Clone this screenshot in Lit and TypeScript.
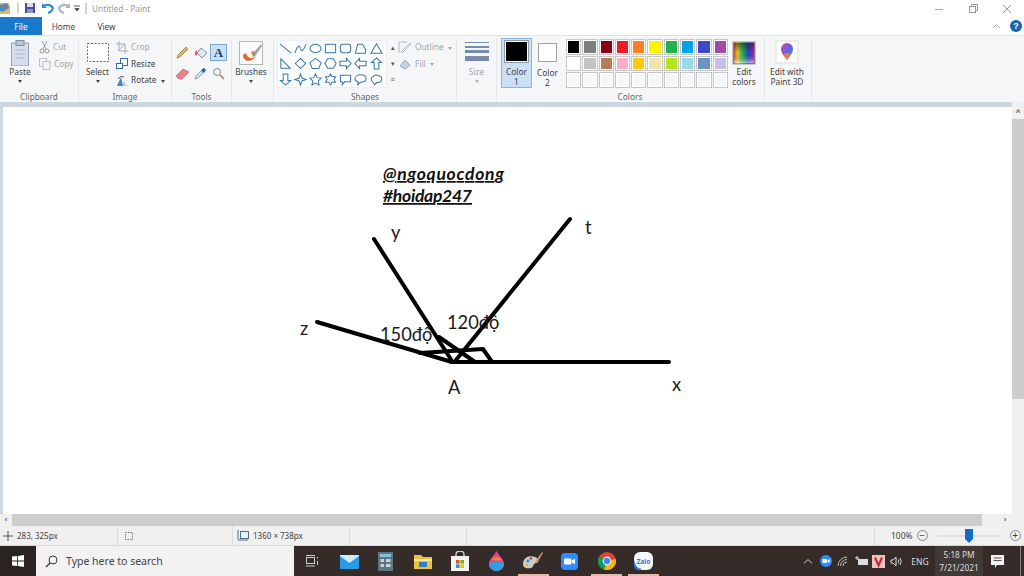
import {LitElement, css, html, svg} from 'lit';
import {customElement} from 'lit/decorators.js';

const ROW_1 = ['#000000', '#7f7f7f', '#880015', '#ed1c24', '#ff7f27', '#fff200', '#22b14c', '#00a2e8', '#3f48cc', '#a349a4'];
const ROW_2 = ['#ffffff', '#c3c3c3', '#b97a57', '#ffaec9', '#ffc90e', '#efe4b0', '#b5e61d', '#99d9ea', '#7092be', '#c8bfe7'];
const ROW_3 = Array(10).fill('#f5f6f7');

// shape gallery glyphs, drawn in a 14x14 box
const SHAPES = [
  svg`<path d="M1 2 L13 12"/>`,
  svg`<path d="M1 12 C4 3 6 3 7 7 S10 10 13 2"/>`,
  svg`<ellipse cx="7" cy="7" rx="6" ry="4.5"/>`,
  svg`<rect x="1.5" y="2.5" width="11" height="9"/>`,
  svg`<rect x="1.5" y="2.5" width="11" height="9" rx="2.5"/>`,
  svg`<path d="M1.5 12 L4 2.5 H9 L12.5 8 V12 Z"/>`,
  svg`<path d="M7 2 L13 12 H1 Z"/>`,
  svg`<path d="M2 2 V12 H12 Z"/>`,
  svg`<path d="M7 1.5 L12.5 7 L7 12.5 L1.5 7 Z"/>`,
  svg`<path d="M7 1.5 L13 6 L10.5 12.5 H3.5 L1 6 Z"/>`,
  svg`<path d="M4 2 H10 L13 7 L10 12 H4 L1 7 Z"/>`,
  svg`<path d="M1 4.5 H8 V1.5 L13 7 L8 12.5 V9.5 H1 Z"/>`,
  svg`<path d="M13 4.5 H6 V1.5 L1 7 L6 12.5 V9.5 H13 Z"/>`,
  svg`<path d="M4.5 13 V6 H1.5 L7 1 L12.5 6 H9.5 V13 Z"/>`,
  svg`<path d="M4.5 1 V8 H1.5 L7 13 L12.5 8 H9.5 V1 Z"/>`,
  svg`<path d="M7 1 L8.5 5.5 L13 7 L8.5 8.5 L7 13 L5.5 8.5 L1 7 L5.5 5.5 Z"/>`,
  svg`<path d="M7 1 L8.8 5 L13 5.5 L10 8.5 L10.8 13 L7 10.8 L3.2 13 L4 8.5 L1 5.5 L5.2 5 Z"/>`,
  svg`<path d="M7 1 L8.7 4 H12.5 L10.6 7 L12.5 10 H8.7 L7 13 L5.3 10 H1.5 L3.4 7 L1.5 4 H5.3 Z"/>`,
  svg`<path d="M1.5 2.5 H12.5 V9.5 H6 L3.5 12.5 V9.5 H1.5 Z"/>`,
  svg`<path d="M7 2 C11 2 13 4 13 6.2 C13 8.5 10.5 10 7 10 L4 12.5 L4.5 9.5 C2.5 9 1 7.8 1 6.2 C1 4 3 2 7 2 Z"/>`,
  svg`<path d="M3 9.5 C0.5 8 1 4.5 3.5 4 C4 2 7 1.5 8.5 3 C11 2.5 13.5 5 12.5 7.5 C12 10 9 10.5 7.5 9.8 L5 12.5 Z"/>`,
];

@customElement('paint-ribbon')
export class PaintRibbon extends LitElement {
  static styles = css`
  :host {
    background: #f5f6f7;
    border-top: 1px solid #e2e3e4;
    box-sizing: border-box;
    color: #444;
    display: flex;
    font: 8.3px/10px "Noto Sans", sans-serif;
    height: 67px;
    padding-top: 2px;
  }

  .group {
    border-right: 1px solid #e6e7e8;
    box-sizing: border-box;
    display: flex;
    flex-direction: column;
    flex: none;
    height: 64px;
  }

  .body {
    display: flex;
    flex: 1;
    min-height: 0;
  }

  .name {
    color: #666;
    height: 11px;
    line-height: 11px;
    text-align: center;
  }

  .tall {
    align-items: center;
    display: flex;
    flex-direction: column;
    flex: none;
    text-align: center;
  }

  .tall svg {
    display: block;
  }

  .tall-label {
    margin-top: 1px;
  }

  .caret {
    border-left: 2.5px solid transparent;
    border-right: 2.5px solid transparent;
    border-top: 3px solid #444;
    display: block;
    height: 0;
    margin-top: 3px;
    width: 0;
  }

  .dim {
    color: #a6a6a6;
  }

  .dim .caret {
    border-top-color: #b0b0b0;
  }

  .rows {
    display: flex;
    flex-direction: column;
    margin-top: 1px;
  }

  .row {
    align-items: center;
    display: flex;
    gap: 3px;
    height: 16.5px;
  }

  .inline-caret {
    border-left: 2.5px solid transparent;
    border-right: 2.5px solid transparent;
    border-top: 3px solid currentColor;
    display: inline-block;
    margin-left: 4px;
    vertical-align: middle;
  }

  .tools {
    display: grid;
    gap: 4px 1px;
    grid-template-columns: repeat(3, 17px);
    grid-template-rows: 17px 17px;
    margin: 6px 0 0 2px;
  }

  .tool {
    align-items: center;
    box-sizing: border-box;
    display: flex;
    justify-content: center;
  }

  .tool.on {
    background: #c9e0f7;
    border: 1px solid #7da7d4;
    color: #1f3f7a;
    font: bold 13px "Liberation Serif", serif;
  }

  .gallery {
    background: #fbfcfd;
    border: 1px solid #eceef0;
    box-sizing: border-box;
    display: grid;
    grid-template-columns: repeat(7, 15.1px);
    grid-template-rows: repeat(3, 15.4px);
    height: 48px;
    margin: 2px 0 0 3px;
    width: 110px;
  }

  .gallery svg {
    fill: #fff;
    height: 13px;
    margin: 1px;
    stroke: #3b78a8;
    stroke-width: 1.1;
    width: 13px;
  }

  .gallery-scroll {
    color: #555;
    display: flex;
    flex-direction: column;
    font-size: 7px;
    height: 48px;
    justify-content: space-around;
    margin-top: 2px;
    text-align: center;
    width: 11px;
  }

  .size-lines {
    display: flex;
    flex-direction: column;
    gap: 2.5px;
    height: 24px;
    margin-top: 4px;
    width: 24px;
  }

  .size-lines i {
    background: #7a8cab;
    display: block;
  }

  .color-btn {
    align-items: center;
    box-sizing: border-box;
    display: flex;
    flex-direction: column;
    height: 50px;
    text-align: center;
    width: 31px;
  }

  .color-btn.on {
    background: #c9e0f7;
    border: 1px solid #8bb5e0;
  }

  .chip {
    box-sizing: border-box;
    display: block;
  }

  .chip.one {
    background: #000;
    border: 1px solid #fff;
    height: 24px;
    margin: 2px 0 5px;
    outline: 1px solid #8f9aa8;
    width: 23px;
  }

  .chip.two {
    background: #fff;
    border: 1px solid #a0a0a0;
    height: 20px;
    margin: 5px 0 6px;
    width: 19px;
  }

  .palette {
    display: grid;
    gap: 1px;
    grid-template-columns: repeat(10, 15.3px);
    grid-auto-rows: 15.5px;
    margin: 1px 0 0 2px;
  }

  .swatch {
    border: 1px solid #c6c6c6;
    box-shadow: inset 0 0 0 1px #fff;
    box-sizing: border-box;
    display: block;
  }
  `;

  render() {
    return html`
    <div class="group" style="width:79px">
      <div class="body">
        <div class="tall" style="width:38px;margin-left:1px">
          <svg width="22" height="28" viewBox="0 0 22 28">
            <rect x="2.5" y="5" width="17" height="23" fill="#d5deeb" stroke="#8fa3bd"/>
            <rect x="7" y="2.5" width="8" height="5" fill="#b7c5d8" stroke="#7f93ad"/>
            <path d="M6 12 H16 M6 16 H16 M6 20 H16" stroke="#a9b8cc"/>
          </svg>
          <span class="tall-label">Paste</span>
          <i class="caret"></i>
        </div>
        <div class="rows dim">
          <div class="row">
            <svg width="11" height="14" viewBox="0 0 11 14" fill="none" stroke="#9a9a9a">
              <path d="M3 1 L7 9 M8 1 L4 9"/><circle cx="3" cy="11" r="2"/><circle cx="8" cy="11" r="2"/>
            </svg>
            <span>Cut</span>
          </div>
          <div class="row">
            <svg width="12" height="12" viewBox="0 0 12 12" fill="#f3f5f8" stroke="#b8c0cc">
              <rect x="0.5" y="0.5" width="7" height="8"/><rect x="4" y="3.5" width="7" height="8"/>
            </svg>
            <span>Copy</span>
          </div>
        </div>
      </div>
      <div class="name">Clipboard</div>
    </div>

    <div class="group" style="width:93px">
      <div class="body">
        <div class="tall" style="width:37px">
          <svg width="24" height="28" viewBox="0 0 24 28">
            <rect x="1.5" y="5.5" width="21" height="18" fill="#fff" stroke="#5f6b7a" stroke-dasharray="2 1.5"/>
          </svg>
          <span class="tall-label">Select</span>
          <i class="caret"></i>
        </div>
        <div class="rows">
          <div class="row dim">
            <svg width="12" height="13" viewBox="0 0 12 13" fill="none" stroke="#a9b0ba">
              <path d="M3 0 V10 H12 M0 3 H9 V13 M3 9 L9 3"/>
            </svg>
            <span>Crop</span>
          </div>
          <div class="row">
            <svg width="12" height="13" viewBox="0 0 12 13" fill="#fff" stroke="#2f6ea8">
              <rect x="4.5" y="1.5" width="7" height="7"/><rect x="0.5" y="6.5" width="6" height="5"/>
            </svg>
            <span>Resize</span>
          </div>
          <div class="row">
            <svg width="12" height="13" viewBox="0 0 12 13">
              <path d="M1 12 L5 3 L7 12 Z" fill="#3d87c4"/><path d="M7 12 L12 12 L7 7 Z" fill="#bcd0e4"/>
              <path d="M2 5 Q4 1 8 3" fill="none" stroke="#555"/>
            </svg>
            <span>Rotate<i class="inline-caret"></i></span>
          </div>
        </div>
      </div>
      <div class="name">Image</div>
    </div>

    <div class="group" style="width:60px">
      <div class="body">
        <div class="tools">
          <span class="tool">
            <svg width="13" height="13" viewBox="0 0 13 13"><path d="M1 12 L2 9 L10 1 L12 3 L4 11 Z" fill="#e2b553" stroke="#8d7a4f" stroke-width=".7"/></svg>
          </span>
          <span class="tool">
            <svg width="14" height="14" viewBox="0 0 14 14"><path d="M7 2 L13 7 L8 12 L3 7 Z" fill="#dfe7f1" stroke="#7d93b0"/><path d="M2 4 Q0 8 2 10 Q4 8 3 5 Z" fill="#e0584c"/></svg>
          </span>
          <span class="tool on">A</span>
          <span class="tool">
            <svg width="15" height="12" viewBox="0 0 15 12"><path d="M1 8 L8 1 L14 4 L7 11 H4 Z" fill="#e8838a" stroke="#b96068" stroke-width=".7"/></svg>
          </span>
          <span class="tool">
            <svg width="13" height="13" viewBox="0 0 13 13"><path d="M1 12 L2 9 L7 4 L9 6 L4 11 Z" fill="#cfe0ee" stroke="#6c8bab" stroke-width=".7"/><path d="M7 3 L10 1 L12 3 L10 6 Z" fill="#1f5f9f"/></svg>
          </span>
          <span class="tool">
            <svg width="13" height="13" viewBox="0 0 13 13" fill="none"><circle cx="5" cy="5" r="3.5" fill="#eef4fa" stroke="#7b8794"/><path d="M8 8 L12 12" stroke="#a5794a" stroke-width="1.6"/></svg>
          </span>
        </div>
      </div>
      <div class="name">Tools</div>
    </div>

    <div class="group" style="width:42px">
      <div class="body">
        <div class="tall" style="width:38px">
          <svg width="26" height="28" viewBox="0 0 26 28">
            <rect x="1.5" y="3.5" width="23" height="23" fill="#fbfbfb" stroke="#b5b5b5"/>
            <path d="M5 17 C5 24 14 25 18 18 C14 22 9 20 8 15 Z" fill="#e2652b"/>
            <path d="M15 15 L23 6 L24 8 L18 17 Z" fill="#a5a9ad"/>
            <path d="M13 14 L16 13 L18 17 L15 19 Z" fill="#b68a58"/>
          </svg>
          <span class="tall-label">Brushes</span>
          <i class="caret"></i>
        </div>
      </div>
    </div>

    <div class="group" style="width:183px">
      <div class="body">
        <div class="gallery">
          ${SHAPES.map((shape) => html`<svg viewBox="0 0 14 14">${shape}</svg>`)}
        </div>
        <div class="gallery-scroll"><span>▴</span><span>▾</span><span>≡</span></div>
        <div class="rows dim">
          <div class="row">
            <svg width="14" height="13" viewBox="0 0 14 13" fill="none" stroke="#b5bcc6"><path d="M1 12 V1 H9 M3 11 L12 2 L13 3 L4 12 Z"/></svg>
            <span>Outline<i class="inline-caret"></i></span>
          </div>
          <div class="row">
            <svg width="14" height="13" viewBox="0 0 14 13"><path d="M2 9 L7 3 L12 8 L7 12 Z" fill="#c6d2e0" stroke="#98a9bd"/></svg>
            <span>Fill<i class="inline-caret"></i></span>
          </div>
        </div>
      </div>
      <div class="name">Shapes</div>
    </div>

    <div class="group" style="width:40px">
      <div class="body">
        <div class="tall dim" style="width:39px">
          <div class="size-lines">
            <i style="height:1px"></i><i style="height:2px"></i><i style="height:3px"></i><i style="height:5px"></i>
          </div>
          <span class="tall-label">Size</span>
          <i class="caret"></i>
        </div>
      </div>
    </div>

    <div class="group" style="width:268px">
      <div class="body">
        <div class="color-btn on" style="margin-left:4px">
          <span class="chip one"></span>
          <span>Color<br>1</span>
        </div>
        <div class="color-btn" style="margin-right:1px">
          <span class="chip two"></span>
          <span>Color<br>2</span>
        </div>
        <div class="palette">
          ${[...ROW_1, ...ROW_2, ...ROW_3].map((color) => html`
          <span class="swatch" style="background:${color}"></span>
          `)}
        </div>
        <div class="tall" style="width:32px">
          <svg width="24" height="25" viewBox="0 0 24 25" style="margin-top:3px">
            <defs>
              <linearGradient id="spec">
                <stop offset="0" stop-color="#e0204a"/><stop offset=".2" stop-color="#e8d020"/>
                <stop offset=".45" stop-color="#20b050"/><stop offset=".7" stop-color="#2040d0"/>
                <stop offset="1" stop-color="#c020a0"/>
              </linearGradient>
              <linearGradient id="shade" x2="0" y2="1">
                <stop offset="0" stop-color="#222" stop-opacity=".6"/><stop offset=".5" stop-color="#222" stop-opacity="0"/>
                <stop offset="1" stop-color="#fff" stop-opacity=".6"/>
              </linearGradient>
            </defs>
            <rect x="1" y="1" width="22" height="22" fill="url(#spec)" stroke="#9a9a9a"/>
            <rect x="2" y="2" width="20" height="20" fill="url(#shade)"/>
          </svg>
          <span style="margin-top:1px">Edit<br>colors</span>
        </div>
      </div>
      <div class="name" style="width:130px;margin-left:68px">Colors</div>
    </div>

    <div class="group" style="width:47px">
      <div class="body">
        <div class="tall" style="width:44px">
          <svg width="24" height="25" viewBox="0 0 24 25" style="margin-top:2px">
            <defs>
              <linearGradient id="drop" x2="1" y2="1">
                <stop offset="0" stop-color="#e040c0"/><stop offset=".5" stop-color="#6a5ae0"/><stop offset="1" stop-color="#20a8e0"/>
              </linearGradient>
            </defs>
            <rect x="1" y="1" width="22" height="22" fill="#fcfcfc" stroke="#dedede"/>
            <path d="M12 20 C8 15 6 12 6 9 A6 6 0 0 1 18 9 C18 12 16 15 12 20 Z" fill="url(#drop)"/>
            <path d="M12 20 C10 17 9 15 9 14 Q12 12 15 14 C15 15 14 17 12 20 Z" fill="#f08030"/>
          </svg>
          <span style="margin-top:2px">Edit with<br>Paint 3D</span>
        </div>
      </div>
    </div>
    `;
  }
}

@customElement('paint-canvas')
export class PaintCanvas extends LitElement {
  static styles = css`
  :host {
    background: #cdd7e4;
    box-sizing: border-box;
    display: block;
    flex: 1;
    min-width: 0;
    padding: 5px 0 0 3px;
    position: relative;
  }

  .sheet {
    background: #fff;
    display: block;
    height: 100%;
    width: 100%;
  }

  .line {
    fill: none;
    stroke: #000;
    stroke-linecap: round;
    stroke-linejoin: round;
    stroke-width: 4;
  }

  .label {
    fill: #1a1a1a;
    font: 18.3px Lato, "Open Sans", sans-serif;
  }

  .credit {
    fill: #111;
    font: italic 700 17.5px Lato, "Open Sans", sans-serif;
    text-decoration: underline;
  }
  `;

  render() {
    // the drawing is offset by the sheet's place on the page (3,107)
    return html`
    <svg class="sheet" viewBox="3 107 1009 407" preserveAspectRatio="xMinYMin slice">
      <text class="credit" x="383" y="180" textLength="121">@ngoquocdong</text>
      <text class="credit" x="383" y="202" textLength="89">#hoidap247</text>
      <path class="line" d="M374 239 L452 361"/>
      <path class="line" d="M570 219 L456 360"/>
      <path class="line" d="M317 322 L452 362"/>
      <path class="line" d="M451 362 H669"/>
      <path class="line" d="M420 353 L483 349 L492 362"/>
      <path class="line" d="M439 337 L475 362"/>
      <text class="label" x="391" y="239">y</text>
      <text class="label" x="585" y="234">t</text>
      <text class="label" x="300" y="335">z</text>
      <text class="label" x="672" y="391">x</text>
      <text class="label" x="448" y="394">A</text>
      <text class="label" x="380" y="341">150độ</text>
      <text class="label" x="447" y="329">120độ</text>
    </svg>
    `;
  }
}

@customElement('app-root')
export class AppRoot extends LitElement {
  static styles = css`
  :host {
    background: #fff;
    display: flex;
    flex-direction: column;
    font-family: "Noto Sans", sans-serif;
    height: 576px;
    overflow: hidden;
    width: 1024px;
  }

  .titlebar {
    align-items: center;
    display: flex;
    flex: none;
    height: 17px;
  }

  .titlebar .quick {
    align-items: center;
    display: flex;
    width: 92px;
  }

  .title {
    color: #999;
    font-size: 8.3px;
  }

  .winbtns {
    align-items: center;
    display: flex;
    margin-left: auto;
  }

  .winbtns span {
    align-items: center;
    display: flex;
    height: 17px;
    justify-content: center;
    width: 34px;
  }

  .tabs {
    align-items: stretch;
    display: flex;
    flex: none;
    font-size: 8.3px;
    height: 18px;
  }

  .tab {
    align-items: center;
    color: #444;
    display: flex;
    justify-content: center;
    width: 43px;
  }

  .tab.file {
    background: #1979ca;
    color: #fff;
    width: 42px;
  }

  .help {
    align-items: center;
    display: flex;
    gap: 9px;
    margin-left: auto;
    padding-right: 2px;
  }

  .help b {
    background: #1565b5;
    border-radius: 50%;
    color: #fff;
    display: block;
    font: bold 9px/12px "Liberation Sans", sans-serif;
    height: 12px;
    text-align: center;
    width: 12px;
  }

  .work {
    display: flex;
    flex: none;
    height: 424px;
  }

  .work-main {
    display: flex;
    flex-direction: column;
    flex: 1;
    min-width: 0;
  }

  .vbar {
    background: #f0f0f0;
    display: flex;
    flex-direction: column;
    flex: none;
    padding-top: 4px;
    width: 12px;
  }

  .thumb-v {
    background: #cdcdcd;
    height: 280px;
    margin-top: 1px;
  }

  .arrow {
    align-items: center;
    color: #555;
    display: flex;
    flex: none;
    font: bold 8px/8px "Liberation Sans", sans-serif;
    height: 12px;
    justify-content: center;
    width: 12px;
  }

  .hbar {
    background: #f0f0f0;
    display: flex;
    flex: none;
    height: 12px;
  }

  .thumb-h {
    background: #cdcdcd;
    width: 970px;
  }

  .status {
    align-items: center;
    background: #f0f0f0;
    border-bottom: 1px solid #d9d9d9;
    box-sizing: border-box;
    color: #444;
    display: flex;
    flex: none;
    font-size: 8px;
    height: 20px;
  }

  .cell {
    align-items: center;
    border-right: 1px solid #dcdcdc;
    box-sizing: border-box;
    display: flex;
    gap: 4px;
    height: 20px;
    padding-left: 3px;
  }

  .zoom {
    align-items: center;
    display: flex;
    flex: 1;
    font-size: 8.5px;
    gap: 4px;
    padding-left: 16px;
  }

  .round {
    align-items: center;
    border: 1px solid #8a8a8a;
    border-radius: 50%;
    box-sizing: border-box;
    color: #444;
    display: flex;
    font: 10px/10px "Liberation Sans", sans-serif;
    height: 11px;
    justify-content: center;
    width: 11px;
  }

  .slider {
    background: #dfdfdf;
    height: 2px;
    margin: 0 5px;
    position: relative;
    width: 64px;
  }

  .slider svg {
    left: 28px;
    position: absolute;
    top: -6px;
  }

  .taskbar {
    align-items: stretch;
    background: #352c29;
    color: #ddd;
    display: flex;
    flex: none;
    height: 30px;
  }

  .start {
    align-items: center;
    background: #2b2321;
    display: flex;
    justify-content: center;
    width: 36px;
  }

  .search {
    align-items: center;
    background: #f2f2f2;
    box-sizing: border-box;
    color: #444;
    display: flex;
    font-size: 10.5px;
    gap: 8px;
    padding-left: 9px;
    width: 258px;
  }

  .task {
    align-items: center;
    box-sizing: border-box;
    display: flex;
    justify-content: center;
    position: relative;
    width: 36.8px;
  }

  .task.open::after {
    background: #e8b9a8;
    bottom: 0;
    content: '';
    height: 2px;
    left: 3px;
    position: absolute;
    right: 3px;
  }

  .tray {
    align-items: center;
    display: flex;
    margin-left: auto;
  }

  .tray-icon {
    align-items: center;
    display: flex;
    justify-content: center;
    width: 17.6px;
  }

  .lang {
    font-size: 8.5px;
    text-align: center;
    width: 30px;
  }

  .clock {
    align-items: center;
    background: #423835;
    display: flex;
    flex-direction: column;
    font-size: 8.3px;
    height: 30px;
    justify-content: center;
    line-height: 13px;
    width: 48px;
  }

  .notify {
    align-items: center;
    display: flex;
    justify-content: center;
    width: 30px;
  }

  .desk {
    border-left: 1px solid #8a8280;
    height: 30px;
    margin: 0 3px 0 7px;
  }
  `;

  render() {
    return html`
    <div class="titlebar">
      <div class="quick">
        <svg width="92" height="17" viewBox="0 0 92 17">
          <path d="M0 3 H8 L10 5 V14 H0 Z" fill="#d8b878"/><path d="M0 5 L7 3 L9 8 L3 12 L0 11 Z" fill="#4a90c8"/>
          <circle cx="5" cy="7" r="1.5" fill="#e85040"/>
          <path d="M18 3 V13" stroke="#a0a0a0"/>
          <rect x="25" y="3" width="10" height="10" fill="#4a4f9a"/><rect x="27" y="3" width="6" height="4" fill="#d8dcec"/><rect x="27" y="9" width="6" height="4" fill="#9095c8"/>
          <path d="M43 6 Q50 3 53 8 Q52 12 48 13" fill="none" stroke="#2f8fd0" stroke-width="2.2"/><path d="M42 3 V8 H47 Z" fill="#2f8fd0"/>
          <path d="M69 6 Q62 3 59 8 Q60 12 64 13" fill="none" stroke="#a8b8c4" stroke-width="2.2"/><path d="M70 3 V8 H65 Z" fill="#a8b8c4"/>
          <path d="M74 6 H80 M75 8.5 H79 L77 11 Z" stroke="#555" fill="#555"/>
          <path d="M86 3 V14" stroke="#a0a0a0"/>
        </svg>
      </div>
      <span class="title">Untitled - Paint</span>
      <div class="winbtns">
        <span><svg width="10" height="10" fill="none" stroke="#aaa"><path d="M1 5.5 H9"/></svg></span>
        <span><svg width="10" height="10" fill="none" stroke="#999"><rect x="1.5" y="2.5" width="6" height="6"/><path d="M3.5 2 V0.5 H9.5 V6.5 H8"/></svg></span>
        <span><svg width="10" height="10" fill="none" stroke="#999"><path d="M1 1 L9 9 M9 1 L1 9"/></svg></span>
      </div>
    </div>

    <div class="tabs">
      <div class="tab file">File</div>
      <div class="tab">Home</div>
      <div class="tab">View</div>
      <div class="help">
        <svg width="9" height="6" fill="none" stroke="#aaa"><path d="M1 5 L4.5 1.5 L8 5"/></svg>
        <b>?</b>
      </div>
    </div>

    <paint-ribbon></paint-ribbon>

    <div class="work">
      <div class="work-main">
        <paint-canvas></paint-canvas>
        <div class="hbar">
          <span class="arrow">‹</span>
          <span class="thumb-h"></span>
          <span class="arrow" style="margin-left:auto;margin-right:1px">›</span>
        </div>
      </div>
      <div class="vbar">
        <span class="arrow">˄</span>
        <span class="thumb-v"></span>
      </div>
    </div>

    <div class="status">
      <div class="cell" style="width:118px">
        <svg width="10" height="10" fill="none" stroke="#555"><path d="M5 0 V10 M0 5 H10"/></svg>
        <span>283, 325px</span>
      </div>
      <div class="cell" style="width:115px;padding-left:5px">
        <svg width="11" height="11" fill="none" stroke="#777" stroke-dasharray="1.5 1"><rect x="2.5" y="2.5" width="7" height="7"/></svg>
      </div>
      <div class="cell" style="width:117px;padding-left:4px">
        <svg width="12" height="11" fill="none" stroke="#4a6f95"><rect x="3.5" y="1.5" width="8" height="7"/><path d="M1 0 V10 H11"/></svg>
        <span>1360 × 738px</span>
      </div>
      <div class="cell" style="width:117px"></div>
      <div class="cell" style="width:408px"></div>
      <div class="zoom">
        <span>100%</span>
        <span class="round">−</span>
        <span class="slider">
          <svg width="8" height="14" viewBox="0 0 8 14"><path d="M0 0 H8 V10 L4 14 L0 10 Z" fill="#0f6cc6"/></svg>
        </span>
        <span class="round">+</span>
      </div>
    </div>

    <div class="taskbar">
      <div class="start">
        <svg width="12" height="12" viewBox="0 0 12 12" fill="#fff"><path d="M0 1.6 L5.2 1 V5.6 H0 Z M6 .9 L12 0 V5.6 H6 Z M0 6.4 H5.2 V11 L0 10.4 Z M6 6.4 H12 V12 L6 11.1 Z"/></svg>
      </div>
      <div class="search">
        <svg width="13" height="13" viewBox="0 0 13 13" fill="none" stroke="#333"><circle cx="8" cy="5" r="4"/><path d="M5 8 L1 12" stroke-width="1.3"/></svg>
        <span>Type here to search</span>
      </div>
      <div class="task">
        <svg width="13" height="12" fill="none" stroke="#cfcfcf"><rect x=".5" y="2.5" width="8" height="6"/><path d="M0 .5 H9 M0 11 H9 M11.5 2 V3.5 M11.5 6 V10"/></svg>
      </div>
      <div class="task">
        <svg width="19" height="15" viewBox="0 0 19 15"><rect y="1" width="19" height="14" rx="1" fill="#2a9be8"/><path d="M0 2 L9.5 9 L19 2 V1 H0 Z" fill="#cfeafc"/></svg>
      </div>
      <div class="task">
        <svg width="15" height="19" viewBox="0 0 15 19">
          <rect width="15" height="19" fill="#5f7582"/><rect x="2" y="2" width="11" height="3" fill="#7fc4dc"/>
          <path d="M2.5 7 H6 V10 H2.5 Z M8 7 H12.5 V10 H8 Z M2.5 12 H6 V15 H2.5 Z M8 12 H12.5 V15 H8 Z" fill="#c8d2d8"/>
        </svg>
      </div>
      <div class="task">
        <svg width="18" height="15" viewBox="0 0 18 15">
          <path d="M0 1 H7 L9 3 H18 V15 H0 Z" fill="#f0c040"/><rect y="5" width="18" height="2" fill="#fbe69a"/><rect x="5" y="8" width="8" height="5" fill="#2a7fc8"/>
        </svg>
      </div>
      <div class="task">
        <svg width="18" height="20" viewBox="0 0 18 20">
          <path d="M5 6 V3 A4 3 0 0 1 13 3 V6" fill="none" stroke="#ddd" stroke-width="1.3"/><rect y="5" width="18" height="15" fill="#f2f2f2"/>
          <rect x="5" y="9" width="3.6" height="3.6" fill="#e8502a"/><rect x="9.4" y="9" width="3.6" height="3.6" fill="#7ab800"/>
          <rect x="5" y="13.4" width="3.6" height="3.6" fill="#1a9be8"/><rect x="9.4" y="13.4" width="3.6" height="3.6" fill="#f8b800"/>
        </svg>
      </div>
      <div class="task">
        <svg width="15" height="20" viewBox="0 0 15 20">
          <path d="M7.5 0 C10 5 15 8 15 13 A7.5 7 0 0 1 0 13 C0 8 5 5 7.5 0 Z" fill="#e0488c"/>
          <path d="M0 13 C3 10 12 10 15 13 A7.5 7 0 0 1 0 13 Z" fill="#2f9fe0"/><path d="M3 8 C5 6 10 6 12 8 C13 10 3 10 3 8 Z" fill="#f08a30"/>
        </svg>
      </div>
      <div class="task open">
        <svg width="22" height="20" viewBox="0 0 22 20">
          <path d="M1 13 C1 6 8 4 13 6 C18 8 17 12 14 12 C11 12 12 16 9 17 C5 18 1 17 1 13 Z" fill="#c8ccd0"/>
          <circle cx="6" cy="10" r="1.4" fill="#3a7fd0"/><circle cx="9" cy="7.5" r="1.4" fill="#e04a3a"/><circle cx="5" cy="14" r="1.4" fill="#e8b030"/>
          <path d="M13 11 L20 1 L21 2 L15 12 Z" fill="#c89a5a"/>
        </svg>
      </div>
      <div class="task">
        <svg width="17" height="17" viewBox="0 0 17 17"><rect width="17" height="17" rx="4" fill="#2d8cff"/><rect x="3" y="5.5" width="7.5" height="6" rx="1.3" fill="#fff"/><path d="M11 7.5 L14 5.5 V11.5 L11 9.5 Z" fill="#fff"/></svg>
      </div>
      <div class="task open">
        <svg width="18" height="18" viewBox="0 0 18 18">
          <circle cx="9" cy="9" r="9" fill="#db4437"/><path d="M9 9 L1.2 4.5 A9 9 0 0 0 6 17.5 Z" fill="#0f9d58"/>
          <path d="M9 9 L17.8 7 A9 9 0 0 1 6 17.5 Z" fill="#f4b400"/><circle cx="9" cy="9" r="4.4" fill="#fff"/><circle cx="9" cy="9" r="3.3" fill="#4285f4"/>
        </svg>
      </div>
      <div class="task open">
        <svg width="19" height="18" viewBox="0 0 19 18">
          <rect width="19" height="18" rx="6" fill="#f4f8fd"/><path d="M0 12 V6 Q0 16 8 17 L6 18 Q0 17 0 12 Z" fill="#1a6fd8"/>
          <text x="9.5" y="11.5" text-anchor="middle" fill="#2a78d8" font-size="6.5" font-family="'Noto Sans',sans-serif" font-weight="700">Zalo</text>
        </svg>
      </div>

      <div class="tray">
        <span class="tray-icon"><svg width="10" height="6" fill="none" stroke="#ddd"><path d="M1 5.5 L5 1.5 L9 5.5"/></svg></span>
        <span class="tray-icon"><svg width="12" height="12" viewBox="0 0 12 12"><circle cx="6" cy="6" r="6" fill="#2d8cff"/><rect x="2.5" y="4" width="4.6" height="4" rx=".8" fill="#fff"/><path d="M7.6 5.5 L9.6 4 V8 L7.6 6.7 Z" fill="#fff"/></svg></span>
        <span class="tray-icon"><svg width="12" height="11" viewBox="0 0 12 11" fill="none" stroke="#bbb"><path d="M1 10 A9 9 0 0 1 10 1 M3.5 10 A6.5 6.5 0 0 1 10 3.5 M6 10 A4 4 0 0 1 10 6"/></svg></span>
        <span class="tray-icon"><svg width="13" height="10" viewBox="0 0 13 10"><rect x="3" y="3" width="10" height="6" fill="#ddd"/><path d="M0 2 H4 M2 0 V4" stroke="#ddd"/></svg></span>
        <span class="tray-icon"><svg width="13" height="13" viewBox="0 0 13 13"><rect width="13" height="13" fill="#eac4bc"/><path d="M3 2.5 L6.5 10.5 L10 2.5" fill="none" stroke="#c8202a" stroke-width="2"/></svg></span>
        <span class="tray-icon"><svg width="13" height="11" viewBox="0 0 13 11" fill="none" stroke="#ddd"><path d="M1 4 H3 L6 1 V10 L3 7 H1 Z M8 3.5 Q9.5 5.5 8 7.5 M10 2 Q12.5 5.5 10 9"/></svg></span>
        <span class="lang">ENG</span>
        <div class="clock"><span>5:18 PM</span><span>7/21/2021</span></div>
        <span class="notify"><svg width="14" height="13" viewBox="0 0 14 13"><path d="M0 0 H13 V10 H6 L4 13 V10 H0 Z" fill="#f2f2f2"/><path d="M2.5 3 H10.5 M2.5 5.5 H10.5" stroke="#555"/></svg></span>
        <span class="desk"></span>
      </div>
    </div>
    `;
  }
}
